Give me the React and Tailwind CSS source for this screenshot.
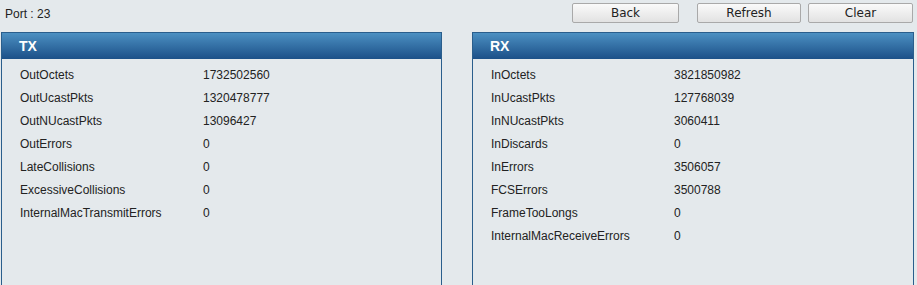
import React from 'react';

const txRows = [
  ['OutOctets', '1732502560'],
  ['OutUcastPkts', '1320478777'],
  ['OutNUcastPkts', '13096427'],
  ['OutErrors', '0'],
  ['LateCollisions', '0'],
  ['ExcessiveCollisions', '0'],
  ['InternalMacTransmitErrors', '0'],
];

const rxRows = [
  ['InOctets', '3821850982'],
  ['InUcastPkts', '127768039'],
  ['InNUcastPkts', '3060411'],
  ['InDiscards', '0'],
  ['InErrors', '3506057'],
  ['FCSErrors', '3500788'],
  ['FrameTooLongs', '0'],
  ['InternalMacReceiveErrors', '0'],
];

const Panel = ({ title, rows, className }) => (
  <div className={`border border-[#2a5e8c] h-[260px] ${className}`}>
    <div className="h-[26px] bg-gradient-to-b from-[#4c90c2] to-[#1c5088] flex items-center pl-[17px] text-white font-bold text-[14px]">
      {title}
    </div>
    <div className="pt-[4px]">
      {rows.map(([label, value]) => (
        <div key={label} className="flex h-[23px] items-center text-[12px] text-[#222]">
          <span className="w-[201px] pl-[18px]">{label}</span>
          <span>{value}</span>
        </div>
      ))}
    </div>
  </div>
);

const Button = ({ children, className }) => (
  <button
    className={`h-[20px] border border-[#a9a9a9] rounded-[2px] bg-gradient-to-b from-[#fafafa] to-[#e2e2e2] text-[12px] text-[#222] font-['DejaVu_Sans',sans-serif] ${className}`}
  >
    {children}
  </button>
);

export default function App() {
  return (
    <div className="w-[917px] h-[285px] overflow-hidden bg-[#e4e9ec] font-['Liberation_Sans',Arial,sans-serif]">
      <div className="flex items-start h-[32px]">
        <div className="pl-[5px] pt-[5px] text-[12px] text-[#222]">Port : 23</div>
        <div className="ml-auto flex pt-[3px] pr-[4px]">
          <Button className="w-[107px]">Back</Button>
          <Button className="w-[104px] ml-[18px]">Refresh</Button>
          <Button className="w-[105px] ml-[7px]">Clear</Button>
        </div>
      </div>
      <div className="flex pl-[1px]">
        <Panel title="TX" rows={txRows} className="w-[441px]" />
        <Panel title="RX" rows={rxRows} className="w-[442px] ml-[30px]" />
      </div>
    </div>
  );
}
